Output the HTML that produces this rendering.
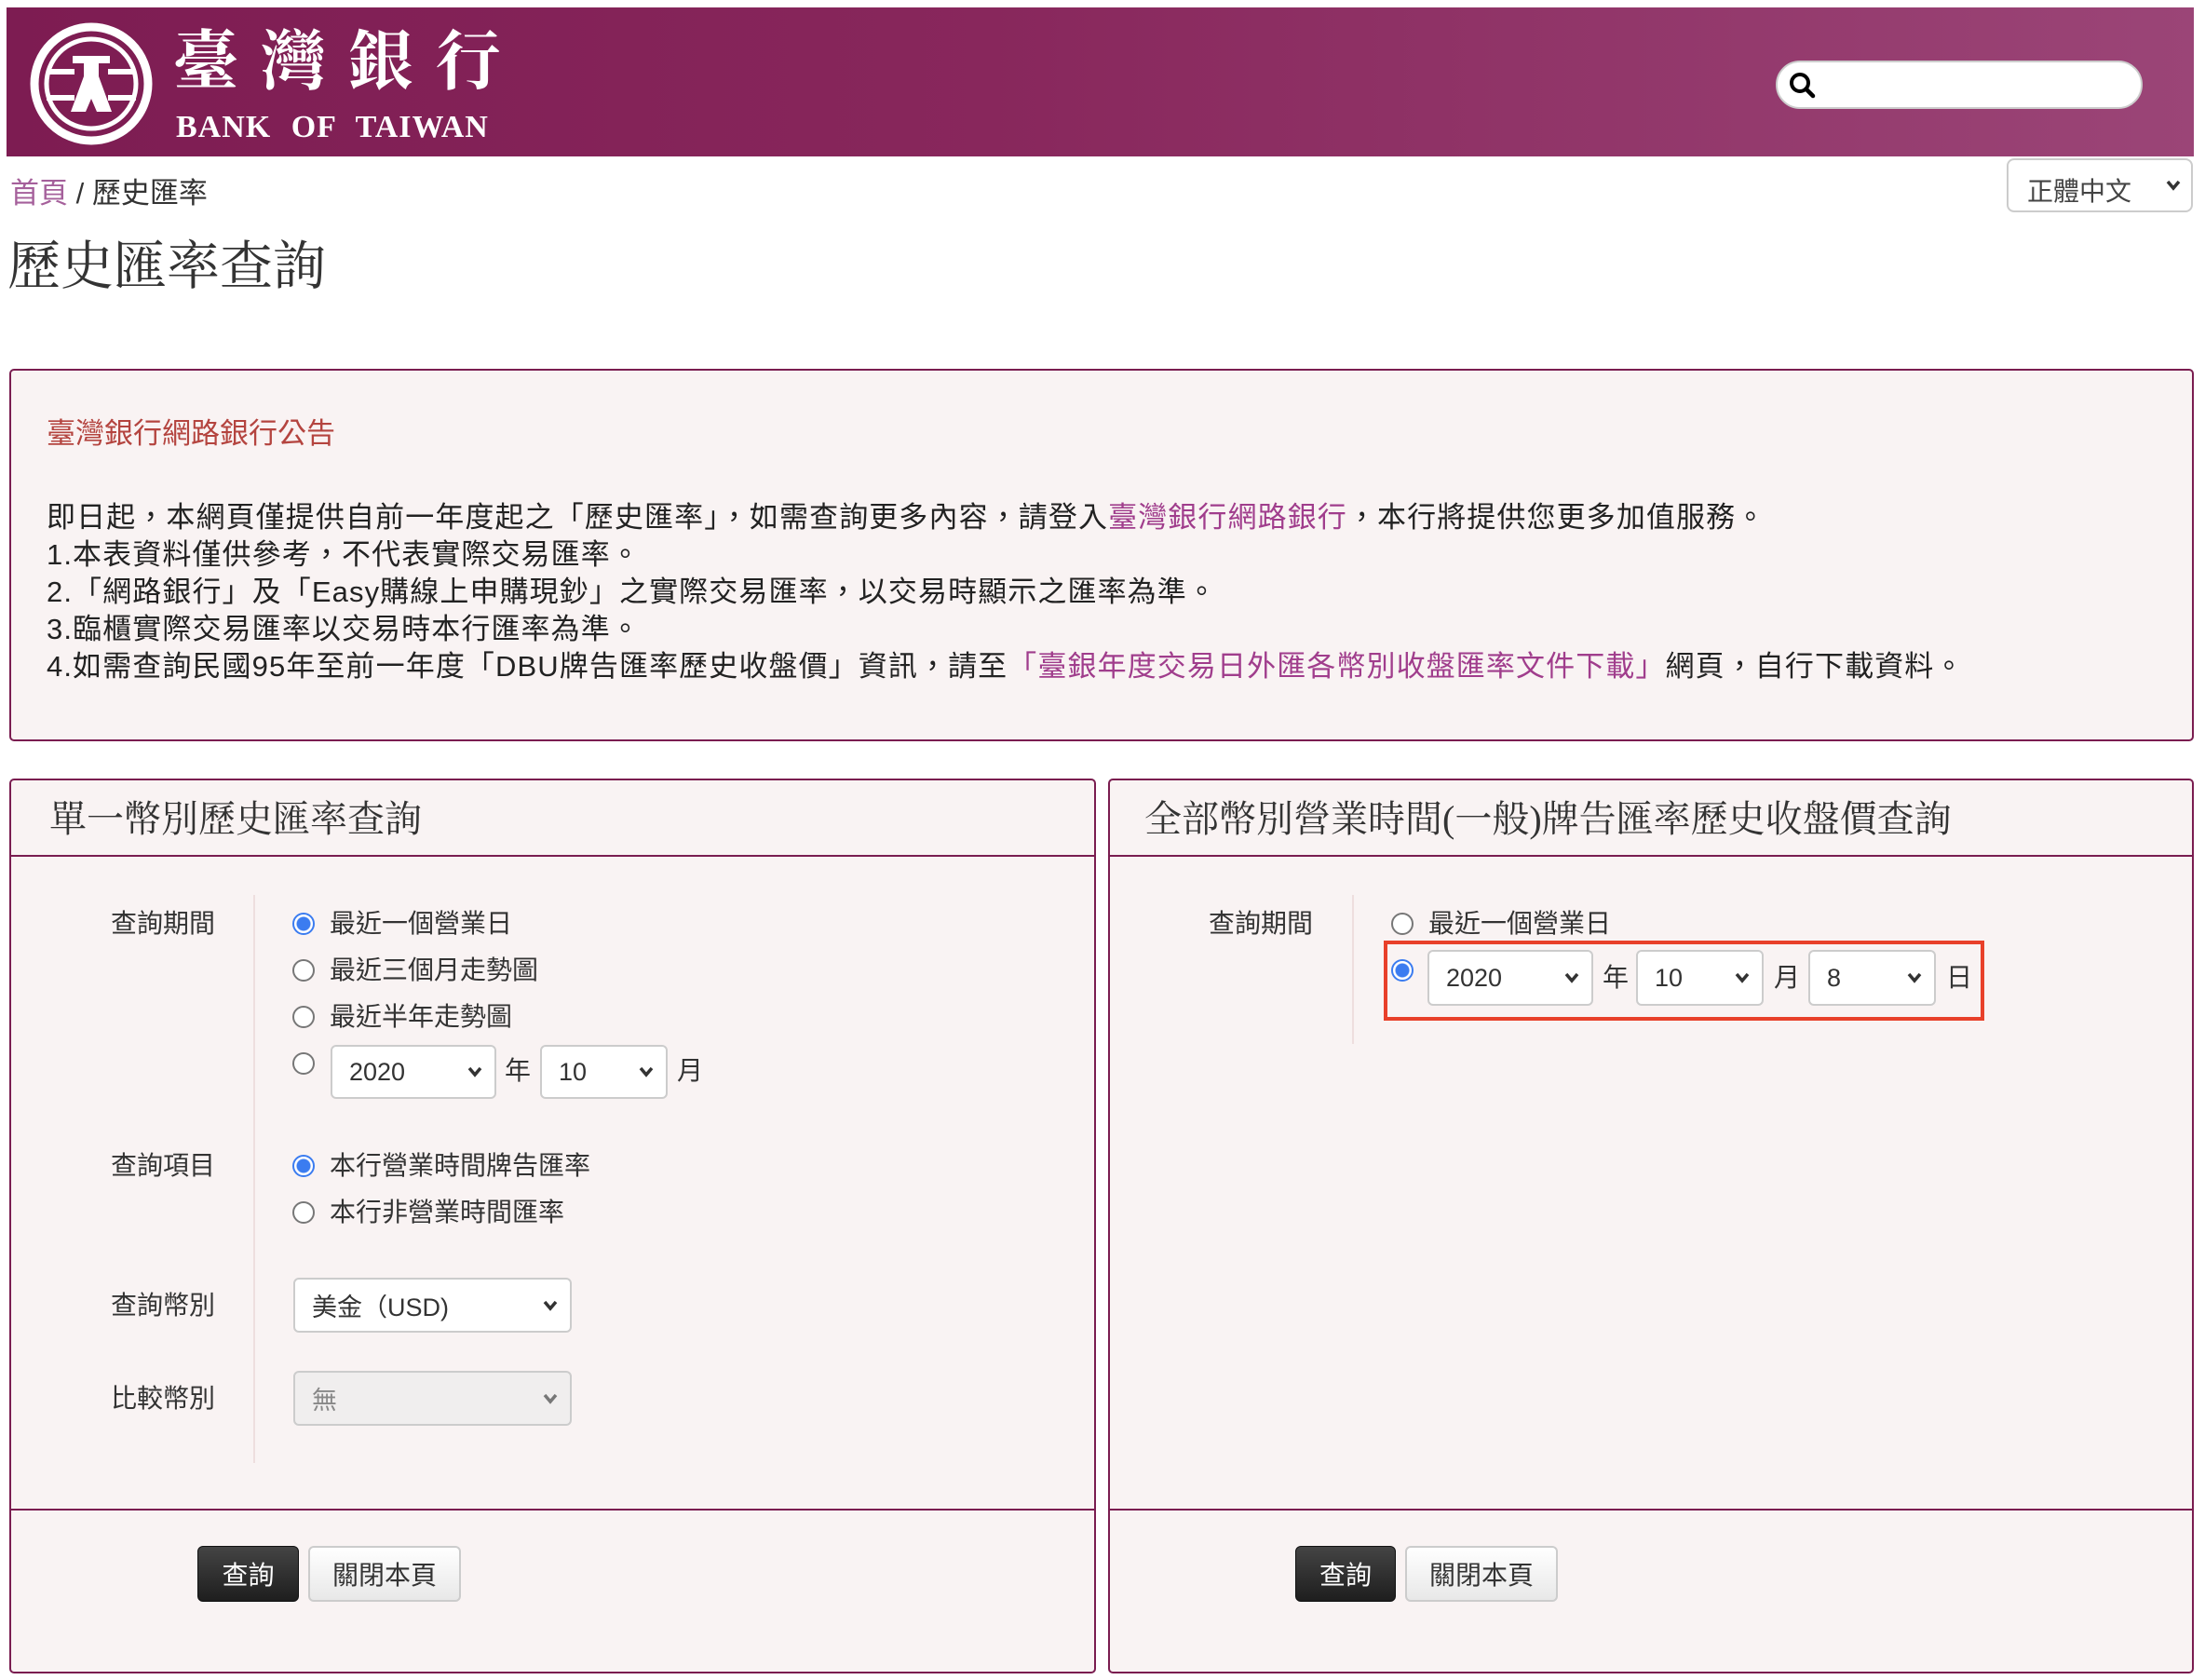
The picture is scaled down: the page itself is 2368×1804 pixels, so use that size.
<!DOCTYPE html>
<html><head><meta charset="utf-8"><style>
*{box-sizing:border-box;margin:0;padding:0}
body{width:2368px;height:1804px;background:#fff;position:relative;overflow:hidden;font-family:"Liberation Sans","Noto Sans CJK TC",sans-serif;color:#333}
.a{position:absolute;white-space:nowrap}
.serif{font-family:"Liberation Serif","Noto Serif CJK SC",serif}
.box{position:absolute;background:#f9f3f3;border:2px solid #7a1d50;border-radius:5px}
.hl{position:absolute;height:2px;background:#7a1d50}
.vl{position:absolute;width:2px;background:#eedede}
.lab{font-size:28px;color:#333;text-align:right;width:200px;line-height:28px}
.opt{font-size:28px;color:#333;line-height:28px}
.r{position:absolute;width:24px;height:24px;border-radius:50%;border:2px solid #777;background:#fff}
.r.on{border:2px solid #3b7cf0;background:radial-gradient(circle,#3b7cf0 0 7px,#fff 8px)}
.sel{position:absolute;background:#fff;border:2px solid #ccc;border-radius:6px;font-size:27px;color:#333;padding-left:18px;display:flex;align-items:center}
.sel svg{position:absolute;right:12px;top:50%;margin-top:-6px}
.btn{position:absolute;border-radius:6px;font-size:28px;display:flex;align-items:center;justify-content:center}
.dk{background:linear-gradient(#444,#1e1e1e);color:#fff;border:1px solid #111}
.lt{background:linear-gradient(#fff,#e8e8e8);color:#333;border:2px solid #ccc}
</style></head><body>
<div class="a" style="left:7px;top:8px;width:2349px;height:160px;background:linear-gradient(90deg,#7d1c52 0%,#88275c 45%,#9b4577 100%)"></div>
<svg class="a" style="left:30px;top:22px" width="136" height="136" viewBox="0 0 136 136">
<circle cx="68" cy="68" r="61" fill="none" stroke="#fff" stroke-width="9"/>
<circle cx="68" cy="68" r="48" fill="none" stroke="#fff" stroke-width="5"/>
<rect x="20" y="52" width="30" height="6" fill="#fff"/><rect x="86" y="52" width="30" height="6" fill="#fff"/>
<rect x="20" y="80" width="30" height="6" fill="#fff"/><rect x="86" y="80" width="30" height="6" fill="#fff"/>
<path d="M48 38 H88 V46 H76 V60 L90 98 H74 L68 84 L62 98 H46 L60 60 V46 H48Z" fill="#fff"/>
</svg>
<div class="a serif" style="left:186px;top:28px;font-size:70px;color:#fff;letter-spacing:24px;font-weight:bold;line-height:80px">臺灣銀行</div>
<div class="a serif" style="left:189px;top:117px;font-size:34px;color:#fff;font-weight:bold;letter-spacing:1px;word-spacing:12px;line-height:40px">BANK OF TAIWAN</div>
<div class="a" style="left:1907px;top:65px;width:394px;height:52px;background:#fff;border-radius:26px;border:2px solid #ccc"></div>
<svg class="a" style="left:1920px;top:76px" width="32" height="32" viewBox="0 0 32 32"><circle cx="13" cy="13" r="9" fill="none" stroke="#000" stroke-width="4"/><path d="M19.5 19.5 L27 27" stroke="#000" stroke-width="4.5" stroke-linecap="round"/></svg>
<div class="a" style="left:2155px;top:170px;width:200px;height:58px;border:2px solid #ccc;border-radius:8px;font-size:28px;color:#444;padding:12px 0 0 20px">正體中文</div>
<svg class="a" style="left:2325px;top:192px" width="18" height="14" viewBox="0 0 18 14"><path d="M3 3 L9 10 L15 3" fill="none" stroke="#333" stroke-width="3.5"/></svg>
<div class="a" style="left:11px;top:188px;font-size:31px;line-height:40px"><span style="color:#a5609b">首頁</span> / 歷史匯率</div>
<div class="a serif" style="left:8px;top:254px;font-size:57px;line-height:66px;color:#333">歷史匯率查詢</div>
<div class="box" style="left:10px;top:396px;width:2346px;height:400px"></div>
<div class="a" style="left:50px;top:446px;font-size:31px;color:#b4443f;line-height:40px">臺灣銀行網路銀行公告</div>
<div class="a" style="left:50px;top:536px;font-size:31px;line-height:40px;color:#222;letter-spacing:1.1px">即日起，本網頁僅提供自前一年度起之「歷史匯率」，如需查詢更多內容，請登入<span style="color:#a03d8c">臺灣銀行網路銀行</span>，本行將提供您更多加值服務。<br>1.本表資料僅供參考，不代表實際交易匯率。<br>2.「網路銀行」及「Easy購線上申購現鈔」之實際交易匯率，以交易時顯示之匯率為準。<br>3.臨櫃實際交易匯率以交易時本行匯率為準。<br>4.如需查詢民國95年至前一年度「DBU牌告匯率歷史收盤價」資訊，請至<span style="color:#a03d8c">「臺銀年度交易日外匯各幣別收盤匯率文件下載」</span>網頁，自行下載資料。</div>
<div class="box" style="left:10px;top:836px;width:1167px;height:961px"></div>
<div class="hl" style="left:10px;top:918px;width:1167px"></div>
<div class="hl" style="left:10px;top:1620px;width:1167px"></div>
<div class="a serif" style="left:53px;top:856px;font-size:40px;line-height:48px;color:#333">單一幣別歷史匯率查詢</div>
<div class="vl" style="left:272px;top:961px;height:610px"></div>
<div class="a lab" style="left:31px;top:978px">查詢期間</div>
<div class="r on" style="left:314px;top:980px"></div><div class="a opt" style="left:354px;top:978px">最近一個營業日</div>
<div class="r" style="left:314px;top:1030px"></div><div class="a opt" style="left:354px;top:1028px">最近三個月走勢圖</div>
<div class="r" style="left:314px;top:1080px"></div><div class="a opt" style="left:354px;top:1078px">最近半年走勢圖</div>
<div class="r" style="left:314px;top:1130px"></div>
<div class="sel" style="left:355px;top:1122px;width:178px;height:58px">2020<svg width="18" height="12" viewBox="0 0 18 12"><path d="M3 2 L9 9 L15 2" fill="none" stroke="#333" stroke-width="3.5"/></svg></div>
<div class="a opt" style="left:542px;top:1136px">年</div>
<div class="sel" style="left:580px;top:1122px;width:137px;height:58px">10<svg width="18" height="12" viewBox="0 0 18 12"><path d="M3 2 L9 9 L15 2" fill="none" stroke="#333" stroke-width="3.5"/></svg></div>
<div class="a opt" style="left:727px;top:1136px">月</div>
<div class="a lab" style="left:31px;top:1238px">查詢項目</div>
<div class="r on" style="left:314px;top:1240px"></div><div class="a opt" style="left:354px;top:1238px">本行營業時間牌告匯率</div>
<div class="r" style="left:314px;top:1290px"></div><div class="a opt" style="left:354px;top:1288px">本行非營業時間匯率</div>
<div class="a lab" style="left:31px;top:1388px">查詢幣別</div>
<div class="sel" style="left:315px;top:1372px;width:299px;height:59px">美金（USD)<svg width="18" height="12" viewBox="0 0 18 12"><path d="M3 2 L9 9 L15 2" fill="none" stroke="#333" stroke-width="3.5"/></svg></div>
<div class="a lab" style="left:31px;top:1488px">比較幣別</div>
<div class="sel" style="left:315px;top:1472px;width:299px;height:59px;background:#f0eeee;color:#888">無<svg width="18" height="12" viewBox="0 0 18 12"><path d="M3 2 L9 9 L15 2" fill="none" stroke="#777" stroke-width="3.5"/></svg></div>
<div class="btn dk" style="left:212px;top:1660px;width:109px;height:60px">查詢</div>
<div class="btn lt" style="left:331px;top:1660px;width:164px;height:60px">關閉本頁</div>
<div class="box" style="left:1190px;top:836px;width:1166px;height:961px"></div>
<div class="hl" style="left:1190px;top:918px;width:1166px"></div>
<div class="hl" style="left:1190px;top:1620px;width:1166px"></div>
<div class="a serif" style="left:1229px;top:856px;font-size:40px;line-height:48px;color:#333">全部幣別營業時間(一般)牌告匯率歷史收盤價查詢</div>
<div class="vl" style="left:1452px;top:961px;height:160px"></div>
<div class="a lab" style="left:1210px;top:978px">查詢期間</div>
<div class="r" style="left:1494px;top:980px"></div><div class="a opt" style="left:1534px;top:978px">最近一個營業日</div>
<div class="a" style="left:1486px;top:1010px;width:645px;height:86px;border:4px solid #e8402a"></div>
<div class="r on" style="left:1494px;top:1030px"></div>
<div class="sel" style="left:1533px;top:1020px;width:178px;height:60px">2020<svg width="18" height="12" viewBox="0 0 18 12"><path d="M3 2 L9 9 L15 2" fill="none" stroke="#333" stroke-width="3.5"/></svg></div>
<div class="a opt" style="left:1721px;top:1036px">年</div>
<div class="sel" style="left:1757px;top:1020px;width:137px;height:60px">10<svg width="18" height="12" viewBox="0 0 18 12"><path d="M3 2 L9 9 L15 2" fill="none" stroke="#333" stroke-width="3.5"/></svg></div>
<div class="a opt" style="left:1905px;top:1036px">月</div>
<div class="sel" style="left:1942px;top:1020px;width:137px;height:60px">8<svg width="18" height="12" viewBox="0 0 18 12"><path d="M3 2 L9 9 L15 2" fill="none" stroke="#333" stroke-width="3.5"/></svg></div>
<div class="a opt" style="left:2090px;top:1036px">日</div>
<div class="btn dk" style="left:1391px;top:1660px;width:108px;height:60px">查詢</div>
<div class="btn lt" style="left:1509px;top:1660px;width:164px;height:60px">關閉本頁</div>
</body></html>
